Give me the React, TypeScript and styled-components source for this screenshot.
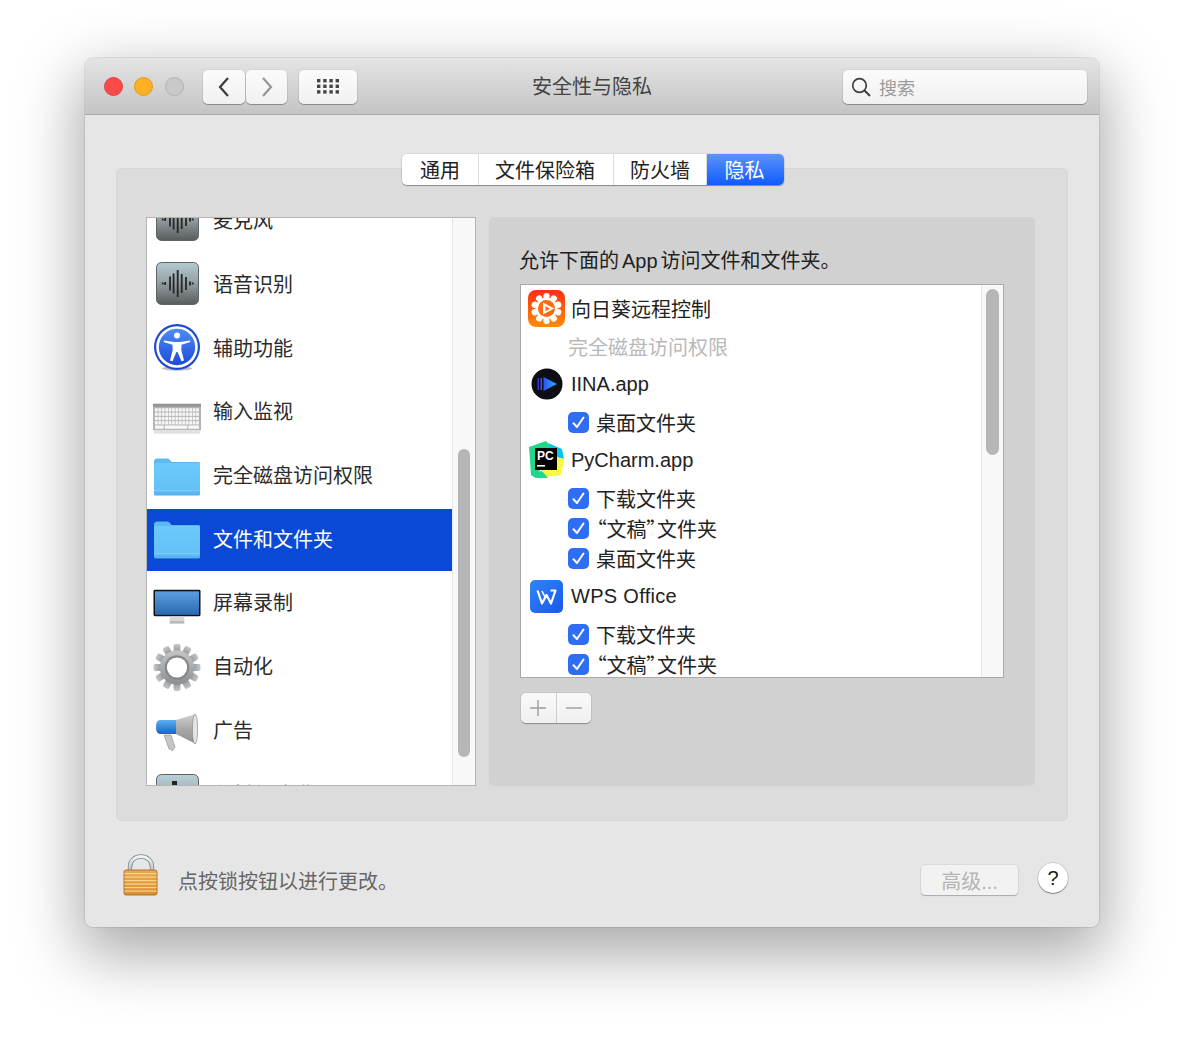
import { FC, ReactNode } from 'react';
import styled, { createGlobalStyle } from 'styled-components';

const Global = createGlobalStyle`
  html, body { margin: 0; padding: 0; background: #fff; }
  body { font-family: "Liberation Sans", "Noto Sans CJK SC", sans-serif; color: #2b2b2b; }
  * { box-sizing: border-box; }
`;

const Page = styled.div`
  width: 1184px;
  height: 1040px;
  padding: 58px 85px 0;
  overflow: hidden;
`;

const Window = styled.div`
  width: 1014px;
  height: 869px;
  border-radius: 8px;
  background: #e6e6e6;
  box-shadow: 0 22px 62px 6px rgba(0, 0, 0, 0.34), 0 0 0 1px rgba(0, 0, 0, 0.08);
  overflow: hidden;
  display: flex;
  flex-direction: column;
`;

const TitleBar = styled.div`
  height: 57px;
  flex: none;
  padding: 1px 12px 0;
  display: grid;
  grid-template-columns: 1fr auto 1fr;
  align-items: center;
  background: linear-gradient(#e4e4e4, #c4c4c4);
  border-bottom: 1px solid #a9a9a9;
`;

const LeftTools = styled.div`
  display: flex;
  align-items: center;
  padding-left: 7px;
`;

const Light = styled.span<{ $c: string; $b: string; $gap?: number }>`
  width: 19px;
  height: 19px;
  border-radius: 50%;
  background: ${(p) => p.$c};
  border: 1px solid ${(p) => p.$b};
  margin-right: ${(p) => p.$gap ?? 11}px;
`;

const ToolButton = styled.div<{ $w: number; $mr?: number }>`
  width: ${(p) => p.$w}px;
  height: 34px;
  margin-right: ${(p) => p.$mr ?? 0}px;
  border-radius: 5px;
  background: linear-gradient(#fbfbfb, #f1f1f1);
  box-shadow: 0 1px 1px rgba(0, 0, 0, 0.3), 0 0 0 0.5px rgba(0, 0, 0, 0.08);
  display: flex;
  align-items: center;
  justify-content: center;
`;

const Title = styled.div`
  font-size: 20px;
  color: #444;
  line-height: 26px;
`;

const SearchBox = styled.div`
  justify-self: end;
  width: 244px;
  height: 34px;
  border-radius: 5px;
  background: linear-gradient(#fbfbfb, #f1f1f1);
  box-shadow: 0 1px 1px rgba(0, 0, 0, 0.3), 0 0 0 0.5px rgba(0, 0, 0, 0.08);
  display: flex;
  align-items: center;
  padding-left: 8px;
  gap: 8px;
  font-size: 18px;
  color: #9a9a9a;
`;

const Content = styled.div`
  flex: 1;
  display: flex;
  flex-direction: column;
  padding: 39px 31px 0;
`;

const Tabs = styled.div`
  align-self: center;
  display: flex;
  height: 31px;
  margin: 0 0 -17px 2px;
  position: relative;
  z-index: 1;
  border-radius: 5px;
  background: #fff;
  box-shadow: 0 1px 1px rgba(0, 0, 0, 0.35), 0 0 0 0.5px rgba(0, 0, 0, 0.12);
  overflow: hidden;
`;

const Tab = styled.div<{ $w: number; $active?: boolean; $pr?: number }>`
  width: ${(p) => p.$w}px;
  padding: 0 ${(p) => p.$pr ?? 0}px 1px 0;
  display: flex;
  align-items: center;
  justify-content: center;
  font-size: 20px;
  color: ${(p) => (p.$active ? '#fff' : '#222')};
  background: ${(p) => (p.$active ? 'linear-gradient(#5c94fb, #0f5bff)' : '#fff')};
  border-right: ${(p) => (p.$active ? 'none' : '1px solid #dcdcdc')};
`;

const Panel = styled.div`
  height: 653px;
  flex: none;
  padding: 49px 33px 35px 30px;
  display: flex;
  gap: 13px;
  border-radius: 6px;
  background: #dcdcdc;
  box-shadow: inset 0 0 0 1px #d6d6d6;
`;

const Categories = styled.div`
  width: 330px;
  flex: none;
  display: flex;
  border: 1px solid #b4b4b4;
  background: #fff;
  overflow: hidden;
`;

const CategoryScroll = styled.div`
  flex: 1;
  overflow: hidden;
`;

const CategoryInner = styled.div`
  margin-top: -29.5px;
`;

const CategoryRow = styled.div<{ $selected?: boolean }>`
  height: 63.7px;
  display: flex;
  align-items: center;
  gap: 12px;
  padding: 0 0 3px 6px;
  font-size: 20px;
  border-top: 2px solid transparent;
  background-clip: padding-box;
  color: ${(p) => (p.$selected ? '#fff' : '#2b2b2b')};
  background-color: ${(p) => (p.$selected ? '#0a49d6' : 'transparent')};
`;

const IconSlot = styled.span<{ $dy: number }>`
  width: 48px;
  height: 48px;
  flex: none;
  display: flex;
  align-items: center;
  justify-content: center;
  transform: translateY(${(p) => p.$dy}px);
`;

const Track = styled.div<{ $w: number; $pt: number; $pl: number }>`
  width: ${(p) => p.$w}px;
  flex: none;
  background: #f8f8f8;
  border-left: 1px solid #e6e6e6;
  padding: ${(p) => p.$pt}px 0 0 ${(p) => p.$pl}px;
`;

const Thumb = styled.div<{ $h: number; $w: number }>`
  width: ${(p) => p.$w}px;
  height: ${(p) => p.$h}px;
  border-radius: 7px;
  background: #b6b6b6;
`;

const Detail = styled.div`
  flex: 1;
  padding: 30px 31px 0;
  border-radius: 5px;
  background: #d1d1d1;
`;

const DetailTitle = styled.div`
  font-size: 20px;
  line-height: 28px;
  margin: 0 0 9px -1px;
  color: #222;
`;

const InlineLatin = styled.span`
  margin: 0 3px;
`;

const AppList = styled.div`
  width: 484px;
  height: 394px;
  display: flex;
  border: 1px solid #a9a9a9;
  background: #fff;
  overflow: hidden;
`;

const AppScroll = styled.div`
  flex: 1;
  overflow: hidden;
  font-size: 20px;
`;

const AppRow = styled.div`
  height: 46px;
  display: flex;
  align-items: center;
  gap: 6px;
  padding-left: 7px;
  color: #222;
`;

const AppIcon = styled.span`
  width: 37px;
  height: 38px;
  flex: none;
  display: flex;
  align-items: center;
  justify-content: center;
`;

const LatinName = styled.span<{ $spacing?: number }>`
  letter-spacing: ${(p) => p.$spacing ?? 0}px;
`;

const SubRow = styled.div<{ $muted?: boolean }>`
  height: 30px;
  display: flex;
  align-items: center;
  gap: 7px;
  padding-left: 47px;
  color: ${(p) => (p.$muted ? '#b9b9b9' : '#222')};
`;

const Check = styled.span`
  width: 21px;
  height: 21px;
  flex: none;
  border-radius: 5px;
  background: #2f6ef2;
  display: flex;
  align-items: center;
  justify-content: center;
`;

const Quote = styled.span<{ $open?: boolean }>`
  display: inline-flex;
  width: 10.5px;
  justify-content: ${(p) => (p.$open ? 'flex-end' : 'flex-start')};
  font-family: "Noto Sans CJK SC", sans-serif;
  font-feature-settings: "palt";
`;

const AddRemove = styled.div`
  display: flex;
  width: 70px;
  height: 30px;
  margin: 15px 0 0 1px;
  border-radius: 5px;
  background: linear-gradient(#f9f9f9, #f0f0f0);
  box-shadow: 0 1px 1px rgba(0, 0, 0, 0.3), 0 0 0 0.5px rgba(0, 0, 0, 0.1);
`;

const AddRemoveCell = styled.div`
  flex: 1;
  display: flex;
  align-items: center;
  justify-content: center;
  & + & { border-left: 1px solid #cfcfcf; }
`;

const Footer = styled.div`
  flex: 1;
  display: flex;
  align-items: flex-start;
  padding: 32px 0 0 7px;
`;

const LockText = styled.div`
  margin: 14px 0 0 19px;
  font-size: 20px;
  line-height: 30px;
  color: #666;
  flex: 1;
`;

const AdvancedButton = styled.div`
  width: 97px;
  height: 30px;
  margin: 12px 20px 0 0;
  border-radius: 4px;
  background: #f2f2f2;
  box-shadow: 0 1px 1px rgba(0, 0, 0, 0.22), 0 0 0 0.5px rgba(0, 0, 0, 0.1);
  display: flex;
  align-items: center;
  justify-content: center;
  font-size: 20px;
  color: #b4b4b4;
`;

const HelpButton = styled.div`
  width: 30px;
  height: 30px;
  margin-top: 10px;
  border-radius: 50%;
  background: #fff;
  box-shadow: 0 1px 1px rgba(0, 0, 0, 0.35), 0 0 0 0.5px rgba(0, 0, 0, 0.2);
  display: flex;
  align-items: center;
  justify-content: center;
  font-size: 20px;
  color: #1a1a1a;
`;

const Chevron: FC<{ dir: 'left' | 'right'; color: string }> = ({ dir, color }) => (
  <svg width="14" height="22" viewBox="0 0 14 22" fill="none">
    <path d={dir === 'left' ? 'M11 2 L3 11 L11 20' : 'M3 2 L11 11 L3 20'} stroke={color} strokeWidth="2.2" />
  </svg>
);

const GridIcon: FC = () => (
  <svg width="22" height="15" viewBox="0 0 22 15" fill="#444">
    {[0, 1, 2].map((r) => [0, 1, 2, 3].map((c) => <rect key={`${r}-${c}`} x={c * 6.2} y={r * 5.6} width="3.4" height="3.4" />))}
  </svg>
);

const SearchIcon: FC = () => (
  <svg width="20" height="20" viewBox="0 0 20 20" fill="none" stroke="#3d3d3d">
    <circle cx="8.5" cy="8.5" r="6.8" strokeWidth="1.7" />
    <path d="M13.5 13.5 L19 19" strokeWidth="2" />
  </svg>
);

const voiceBars: [number, number][] = [
  [6.7, 2], [9.2, 3], [14, 14], [17.6, 20], [21.7, 27], [25.7, 19], [30, 13], [34, 4], [36.7, 2],
];

const VoiceTile: FC<{ id: string }> = ({ id }) => (
  <svg width="43" height="43" viewBox="0 0 43 43">
    <defs>
      <linearGradient id={id} x1="0" y1="0" x2="0" y2="1">
        <stop offset="0" stopColor="#b4cad2" />
        <stop offset="0.45" stopColor="#97a4a7" />
        <stop offset="1" stopColor="#595c5c" />
      </linearGradient>
    </defs>
    <rect x="0.5" y="0.5" width="42" height="42" rx="5" fill={`url(#${id})`} stroke="#5d6466" />
    {voiceBars.map(([x, h]) => (
      <rect key={x} x={x - 0.9} y={21.5 - h / 2} width="1.8" height={h} fill="#262626" />
    ))}
  </svg>
);

const AnalyticsTile: FC = () => (
  <svg width="43" height="50" viewBox="0 0 43 50">
    <defs>
      <linearGradient id="ana" x1="0" y1="0" x2="0" y2="1">
        <stop offset="0" stopColor="#b9d0d8" />
        <stop offset="1" stopColor="#7a8588" />
      </linearGradient>
    </defs>
    <rect x="0.5" y="6.5" width="42" height="42" rx="5" fill="url(#ana)" stroke="#5d6466" />
    <rect x="16" y="13" width="5" height="24" fill="#222" />
  </svg>
);

const AccessIcon: FC = () => (
  <svg width="48" height="48" viewBox="0 0 48 48">
    <defs>
      <linearGradient id="acc" x1="0" y1="0" x2="0" y2="1">
        <stop offset="0" stopColor="#4f8ef2" />
        <stop offset="1" stopColor="#1c48d8" />
      </linearGradient>
    </defs>
    <ellipse cx="24" cy="45.5" rx="15" ry="2" fill="#000" opacity="0.25" />
    <circle cx="24" cy="24" r="23" fill="#1b49d6" />
    <circle cx="24" cy="24" r="19.5" fill="url(#acc)" stroke="#fff" strokeWidth="2.6" />
    <circle cx="24" cy="12.5" r="3" fill="#fff" />
    <path d="M11 17.5 L21 19 H27 L37 17.5 L37.3 19 L28.5 21.8 L28.3 27 L31 37.5 L28.5 38.2 L24.6 29 H23.4 L19.5 38.2 L17 37.5 L19.7 27 L19.5 21.8 L10.7 19 Z" fill="#fff" />
  </svg>
);

const KeyboardIcon: FC = () => (
  <svg width="49" height="32" viewBox="0 0 49 32">
    <rect x="0" y="0.5" width="49" height="27" fill="#b4b4b4" />
    <rect x="0" y="0.5" width="49" height="3" fill="#949494" />
    <rect x="1" y="28" width="47" height="3" fill="#000" opacity="0.12" />
    {[0, 1, 2, 3].map((r) =>
      Array.from({ length: 13 }).map((_, c) => (
        <rect key={`${r}-${c}`} x={2 + c * 3.5} y={5 + r * 4.4} width="2.8" height="3.4" fill="#f7f7f7" />
      )),
    )}
    <rect x="2" y="22.6" width="9" height="3.4" fill="#f7f7f7" />
    <rect x="12" y="22.6" width="23" height="3.4" fill="#f7f7f7" />
    <rect x="36" y="22.6" width="11" height="3.4" fill="#f7f7f7" />
  </svg>
);

const FolderIcon: FC<{ id: string }> = ({ id }) => (
  <svg width="46" height="38" viewBox="0 0 46 38">
    <defs>
      <linearGradient id={id} x1="0" y1="0" x2="0" y2="1">
        <stop offset="0" stopColor="#6cc9fb" />
        <stop offset="0.85" stopColor="#64c1f6" />
        <stop offset="1" stopColor="#4fadea" />
      </linearGradient>
    </defs>
    <path d="M0 4 Q0 0.5 3 0.5 H13 Q15 0.5 16 2 L17.5 4 H45 Q46 4 46 5.5 V8 H0 Z" fill="#5db8f1" />
    <rect x="0" y="5" width="46" height="32.5" rx="1.5" fill={`url(#${id})`} />
    <rect x="0" y="32" width="46" height="1" fill="#fff" opacity="0.18" />
  </svg>
);

const MonitorIcon: FC = () => (
  <svg width="49" height="36" viewBox="0 0 49 36">
    <defs>
      <linearGradient id="scr" x1="0" y1="0" x2="0" y2="1">
        <stop offset="0" stopColor="#5b9ee0" />
        <stop offset="1" stopColor="#2a6ab0" />
      </linearGradient>
    </defs>
    <rect x="0.5" y="0.5" width="48" height="27" rx="1.5" fill="#111" />
    <rect x="2" y="2" width="45" height="24" fill="url(#scr)" />
    <rect x="17" y="28" width="15" height="4" fill="#d8d8d8" />
    <rect x="17" y="32" width="15" height="3" fill="#b9b9b9" />
  </svg>
);

const GearIcon: FC = () => (
  <svg width="49" height="49" viewBox="0 0 49 49">
    <defs>
      <linearGradient id="gear" x1="0" y1="0" x2="0" y2="1">
        <stop offset="0" stopColor="#c4c7c9" />
        <stop offset="1" stopColor="#8b8e91" />
      </linearGradient>
    </defs>
    {Array.from({ length: 12 }).map((_, i) => (
      <rect key={i} x="21" y="0.5" width="7" height="10" rx="2" fill="url(#gear)" transform={`rotate(${i * 30} 24.5 24.5)`} />
    ))}
    <circle cx="24.5" cy="24.5" r="17.5" fill="url(#gear)" />
    <circle cx="24.5" cy="24.5" r="12.5" fill="#85888b" />
    <circle cx="24.5" cy="24.5" r="10.3" fill="#fff" />
  </svg>
);

const MegaphoneIcon: FC = () => (
  <svg width="42" height="38" viewBox="0 0 42 38">
    <defs>
      <linearGradient id="horn" x1="0" y1="0" x2="0" y2="1">
        <stop offset="0" stopColor="#cfcfcf" />
        <stop offset="0.5" stopColor="#a8a8a8" />
        <stop offset="1" stopColor="#8f8f8f" />
      </linearGradient>
      <linearGradient id="mbody" x1="0" y1="0" x2="0" y2="1">
        <stop offset="0" stopColor="#5ab0f2" />
        <stop offset="1" stopColor="#1b63c4" />
      </linearGradient>
    </defs>
    <path d="M8 21 L15 21 L19 33 L17 36.5 L13 35 Z" fill="#c6c6c6" stroke="#8b8b8b" strokeWidth="0.6" />
    <path d="M20 6 L38 0.5 L40 30 L20 20 Z" fill="url(#horn)" />
    <ellipse cx="39" cy="15" rx="2.6" ry="15" fill="#e6e6e6" stroke="#8a8a8a" strokeWidth="0.7" />
    <path d="M4 6 H20 V20 H4 Q0 20 0 13 Q0 6 4 6 Z" fill="url(#mbody)" />
  </svg>
);

const SunflowerIcon: FC = () => (
  <svg width="37" height="37" viewBox="0 0 37 37">
    <defs>
      <linearGradient id="sun" x1="0" y1="0" x2="0" y2="1">
        <stop offset="0" stopColor="#fb2f10" />
        <stop offset="1" stopColor="#ff8c06" />
      </linearGradient>
    </defs>
    <rect width="37" height="37" rx="8" fill="url(#sun)" />
    {Array.from({ length: 10 }).map((_, i) => (
      <ellipse key={i} cx="18.5" cy="6" rx="3.2" ry="3" fill="#fff" transform={`rotate(${i * 36} 18.5 18.5)`} />
    ))}
    <circle cx="18.5" cy="18.5" r="11" fill="#fff" />
    <circle cx="18.5" cy="18.5" r="8.5" fill="#ff6a12" />
    <path d="M15 12.5 L26 18.5 L15 24.5 Z" fill="#fff" />
    <path d="M17.5 16 L22 18.7 L17.5 21.2 Z" fill="#ff6a12" />
  </svg>
);

const IinaIcon: FC = () => (
  <svg width="32" height="32" viewBox="0 0 32 32">
    <defs>
      <linearGradient id="iina" x1="0" y1="0" x2="1" y2="0">
        <stop offset="0" stopColor="#3050ff" />
        <stop offset="1" stopColor="#1fb8f5" />
      </linearGradient>
    </defs>
    <circle cx="16" cy="16" r="15.5" fill="#0d0e14" />
    <rect x="6.5" y="10" width="1.6" height="12" fill="#3a30d8" />
    <rect x="9.5" y="10" width="1.6" height="12" fill="#3550f0" />
    <path d="M12.5 9 L26 16 L12.5 23 Z" fill="url(#iina)" />
  </svg>
);

const PyCharmIcon: FC = () => (
  <svg width="37" height="38" viewBox="0 0 37 38">
    <path d="M1 6 L18 0 L24 7 L8 37 L3 34 Z" fill="#21d789" />
    <path d="M20 2 L34 8 L36 18 L26 16 Z" fill="#07c3f2" />
    <path d="M10 37 L33 34 L36.5 18 L22 14 Z" fill="#fcf84a" />
    <path d="M3 33 L14 30 L20 37 H8 Z" fill="#21d789" />
    <rect x="7" y="7" width="22" height="22" fill="#000" />
    <text x="9" y="19" fontFamily="'Liberation Sans', sans-serif" fontSize="12" fontWeight="700" fill="#fff">PC</text>
    <rect x="9" y="24" width="8" height="1.6" fill="#fff" />
  </svg>
);

const WpsIcon: FC = () => (
  <svg width="33" height="33" viewBox="0 0 33 33">
    <defs>
      <linearGradient id="wps" x1="0" y1="0" x2="1" y2="1">
        <stop offset="0" stopColor="#2e86f8" />
        <stop offset="1" stopColor="#1d57e6" />
      </linearGradient>
    </defs>
    <rect width="33" height="33" rx="5" fill="url(#wps)" />
    <path d="M7.5 10.5 L12 23.5 L16.5 15 L21 23.5 L25.5 10.5 H20.5" fill="none" stroke="#fff" strokeWidth="2.2" strokeLinejoin="round" />
    <path d="M12 11 L15 17" fill="none" stroke="#fff" strokeWidth="1.6" />
  </svg>
);

const LockIcon: FC = () => (
  <svg width="36" height="44" viewBox="0 0 36 44">
    <defs>
      <linearGradient id="shackle" x1="0" y1="0" x2="0" y2="1">
        <stop offset="0" stopColor="#f1f4f6" />
        <stop offset="1" stopColor="#b3bcc2" />
      </linearGradient>
      <linearGradient id="lockbody" x1="0" y1="0" x2="0" y2="1">
        <stop offset="0" stopColor="#eaa94f" />
        <stop offset="1" stopColor="#d98f35" />
      </linearGradient>
    </defs>
    <path d="M7 19 V14 C7 0 29 0 29 14 V19" fill="none" stroke="#7f8a91" strokeWidth="4.4" />
    <path d="M7 19 V14 C7 0 29 0 29 14 V19" fill="none" stroke="url(#shackle)" strokeWidth="2.8" />
    <rect x="1" y="17" width="33" height="25" rx="2" fill="url(#lockbody)" stroke="#a86d26" strokeWidth="0.9" />
    {[0, 1, 2, 3, 4, 5].map((i) => (
      <rect key={i} x="1.5" y={20 + i * 3.5} width="32" height="1.2" fill="#fbd389" />
    ))}
  </svg>
);

const Tick: FC = () => (
  <svg width="15" height="15" viewBox="0 0 15 15" fill="none">
    <path d="M2.5 8.2 L6 12 L12.5 2.5" stroke="#fff" strokeWidth="2" strokeLinecap="round" strokeLinejoin="round" />
  </svg>
);

const Folder: FC<{ label: ReactNode }> = ({ label }) => (
  <SubRow>
    <Check><Tick /></Check>
    <span>{label}</span>
  </SubRow>
);

const DocsLabel = (
  <>
    <Quote $open>“</Quote>文稿<Quote>”</Quote>文件夹
  </>
);

const categories: { label: string; icon: ReactNode; dy: number; selected?: boolean }[] = [
  { label: '麦克风', icon: <VoiceTile id="v1" />, dy: 0 },
  { label: '语音识别', icon: <VoiceTile id="v2" />, dy: 0 },
  { label: '辅助功能', icon: <AccessIcon />, dy: 0 },
  { label: '输入监视', icon: <KeyboardIcon />, dy: 8 },
  { label: '完全磁盘访问权限', icon: <FolderIcon id="f1" />, dy: 2 },
  { label: '文件和文件夹', icon: <FolderIcon id="f2" />, dy: 2, selected: true },
  { label: '屏幕录制', icon: <MonitorIcon />, dy: 5 },
  { label: '自动化', icon: <GearIcon />, dy: 2 },
  { label: '广告', icon: <MegaphoneIcon />, dy: 4 },
  { label: '分析与改进', icon: <AnalyticsTile />, dy: 0 },
];

const App: FC = () => (
  <Page>
    <Global />
    <Window>
      <TitleBar>
        <LeftTools>
          <Light $c="#fc4a4a" $b="#e2403f" />
          <Light $c="#fdb024" $b="#e09a1e" $gap={12} />
          <Light $c="#c9c9c9" $b="#b2b2b2" $gap={19} />
          <ToolButton $w={42} $mr={1}><Chevron dir="left" color="#3c3c3c" /></ToolButton>
          <ToolButton $w={41} $mr={12}><Chevron dir="right" color="#969696" /></ToolButton>
          <ToolButton $w={58}><GridIcon /></ToolButton>
        </LeftTools>
        <Title>安全性与隐私</Title>
        <SearchBox>
          <SearchIcon />
          搜索
        </SearchBox>
      </TitleBar>

      <Content>
        <Tabs>
          <Tab $w={77}>通用</Tab>
          <Tab $w={135} $pr={2}>文件保险箱</Tab>
          <Tab $w={93}>防火墙</Tab>
          <Tab $w={77} $pr={2} $active>隐私</Tab>
        </Tabs>

        <Panel>
          <Categories>
            <CategoryScroll>
              <CategoryInner>
                {categories.map((c) => (
                  <CategoryRow key={c.label} $selected={c.selected}>
                    <IconSlot $dy={c.dy}>{c.icon}</IconSlot>
                    {c.label}
                  </CategoryRow>
                ))}
              </CategoryInner>
            </CategoryScroll>
            <Track $w={23} $pt={231} $pl={5}>
              <Thumb $w={12} $h={308} />
            </Track>
          </Categories>

          <Detail>
            <DetailTitle>允许下面的<InlineLatin>App</InlineLatin>访问文件和文件夹。</DetailTitle>
            <AppList>
              <AppScroll>
                <AppRow>
                  <AppIcon><SunflowerIcon /></AppIcon>
                  向日葵远程控制
                </AppRow>
                <SubRow $muted>完全磁盘访问权限</SubRow>
                <AppRow>
                  <AppIcon><IinaIcon /></AppIcon>
                  <LatinName>IINA.app</LatinName>
                </AppRow>
                <Folder label="桌面文件夹" />
                <AppRow>
                  <AppIcon><PyCharmIcon /></AppIcon>
                  <LatinName>PyCharm.app</LatinName>
                </AppRow>
                <Folder label="下载文件夹" />
                <Folder label={DocsLabel} />
                <Folder label="桌面文件夹" />
                <AppRow>
                  <AppIcon><WpsIcon /></AppIcon>
                  <LatinName $spacing={0.3}>WPS Office</LatinName>
                </AppRow>
                <Folder label="下载文件夹" />
                <Folder label={DocsLabel} />
              </AppScroll>
              <Track $w={22} $pt={4} $pl={4}>
                <Thumb $w={13} $h={166} />
              </Track>
            </AppList>
            <AddRemove>
              <AddRemoveCell>
                <svg width="18" height="18" viewBox="0 0 18 18" stroke="#9c9c9c" strokeWidth="1.4"><path d="M9 1 V17 M1 9 H17" /></svg>
              </AddRemoveCell>
              <AddRemoveCell>
                <svg width="18" height="18" viewBox="0 0 18 18" stroke="#9c9c9c" strokeWidth="1.4"><path d="M1 9 H17" /></svg>
              </AddRemoveCell>
            </AddRemove>
          </Detail>
        </Panel>

        <Footer>
          <LockIcon />
          <LockText>点按锁按钮以进行更改。</LockText>
          <AdvancedButton>高级...</AdvancedButton>
          <HelpButton>?</HelpButton>
        </Footer>
      </Content>
    </Window>
  </Page>
);

export default App;
